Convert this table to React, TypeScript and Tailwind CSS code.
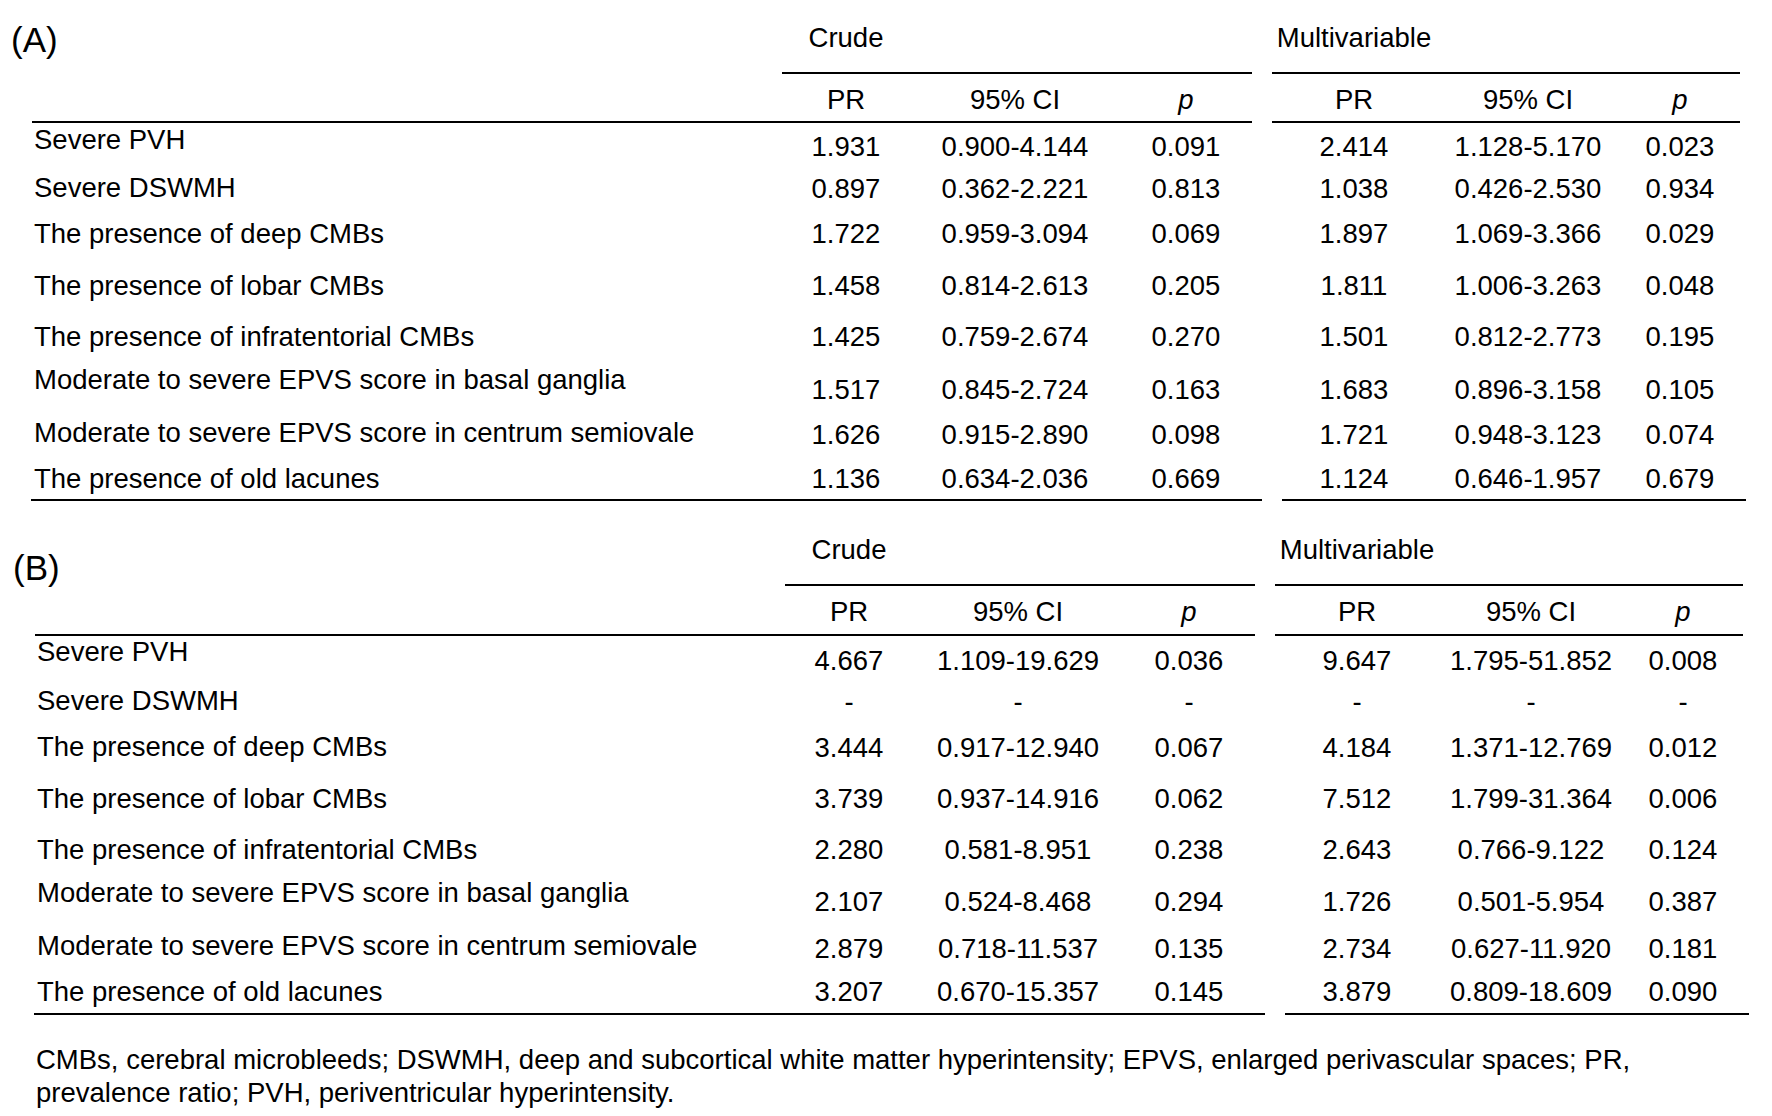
type Row = {
  label: string;
  v: string[];
  h: string;
  vt: string;
  lt: string;
};

const rowsA: Row[] = [
  { label: "Severe PVH", v: ["1.931", "0.900-4.144", "0.091", "2.414", "1.128-5.170", "0.023"], h: "h-[45px]", vt: "pt-[9px]", lt: "pt-[2px]" },
  { label: "Severe DSWMH", v: ["0.897", "0.362-2.221", "0.813", "1.038", "0.426-2.530", "0.934"], h: "h-[44px]", vt: "pt-[6px]", lt: "pt-[5px]" },
  { label: "The presence of deep CMBs", v: ["1.722", "0.959-3.094", "0.069", "1.897", "1.069-3.366", "0.029"], h: "h-[48px]", vt: "pt-[7px]", lt: "pt-[7px]" },
  { label: "The presence of lobar CMBs", v: ["1.458", "0.814-2.613", "0.205", "1.811", "1.006-3.263", "0.048"], h: "h-[51px]", vt: "pt-[11px]", lt: "pt-[11px]" },
  { label: "The presence of infratentorial CMBs", v: ["1.425", "0.759-2.674", "0.270", "1.501", "0.812-2.773", "0.195"], h: "h-[52px]", vt: "pt-[11px]", lt: "pt-[11px]" },
  { label: "Moderate to severe EPVS score in basal ganglia", v: ["1.517", "0.845-2.724", "0.163", "1.683", "0.896-3.158", "0.105"], h: "h-[49px]", vt: "pt-[12px]", lt: "pt-[2px]" },
  { label: "Moderate to severe EPVS score in centrum semiovale", v: ["1.626", "0.915-2.890", "0.098", "1.721", "0.948-3.123", "0.074"], h: "h-[45px]", vt: "pt-[8px]", lt: "pt-[6px]" },
  { label: "The presence of old lacunes", v: ["1.136", "0.634-2.036", "0.669", "1.124", "0.646-1.957", "0.679"], h: "h-[42px]", vt: "pt-[7px]", lt: "pt-[7px]" },
];

const rowsB: Row[] = [
  { label: "Severe PVH", v: ["4.667", "1.109-19.629", "0.036", "9.647", "1.795-51.852", "0.008"], h: "h-[45px]", vt: "pt-[10px]", lt: "pt-[1px]" },
  { label: "Severe DSWMH", v: ["-", "-", "-", "-", "-", "-"], h: "h-[44px]", vt: "pt-[6px]", lt: "pt-[5px]" },
  { label: "The presence of deep CMBs", v: ["3.444", "0.917-12.940", "0.067", "4.184", "1.371-12.769", "0.012"], h: "h-[49px]", vt: "pt-[8px]", lt: "pt-[7px]" },
  { label: "The presence of lobar CMBs", v: ["3.739", "0.937-14.916", "0.062", "7.512", "1.799-31.364", "0.006"], h: "h-[51px]", vt: "pt-[10px]", lt: "pt-[10px]" },
  { label: "The presence of infratentorial CMBs", v: ["2.280", "0.581-8.951", "0.238", "2.643", "0.766-9.122", "0.124"], h: "h-[51px]", vt: "pt-[10px]", lt: "pt-[10px]" },
  { label: "Moderate to severe EPVS score in basal ganglia", v: ["2.107", "0.524-8.468", "0.294", "1.726", "0.501-5.954", "0.387"], h: "h-[49px]", vt: "pt-[11px]", lt: "pt-[2px]" },
  { label: "Moderate to severe EPVS score in centrum semiovale", v: ["2.879", "0.718-11.537", "0.135", "2.734", "0.627-11.920", "0.181"], h: "h-[46px]", vt: "pt-[9px]", lt: "pt-[6px]" },
  { label: "The presence of old lacunes", v: ["3.207", "0.670-15.357", "0.145", "3.879", "0.809-18.609", "0.090"], h: "h-[42px]", vt: "pt-[6px]", lt: "pt-[6px]" },
];

function Cells({ a, b, c, wide }: { a: React.ReactNode; b: React.ReactNode; c: React.ReactNode; wide?: boolean }) {
  // crude group widths vs multivariable group widths
  if (wide) {
    return (
      <>
        <div className="w-[128px] text-center">{a}</div>
        <div className="w-[210px] text-center">{b}</div>
        <div className="w-[132px] text-center">{c}</div>
      </>
    );
  }
  return (
    <>
      <div className="w-[164px] text-center">{a}</div>
      <div className="w-[184px] text-center">{b}</div>
      <div className="w-[120px] text-center">{c}</div>
    </>
  );
}

function DataRow({ row }: { row: Row }) {
  return (
    <div className={`flex ${row.h}`}>
      <div className={`w-[748px] whitespace-nowrap ${row.lt}`}>{row.label}</div>
      <div className={`flex w-[470px] ${row.vt}`}>
        <Cells wide a={row.v[0]} b={row.v[1]} c={row.v[2]} />
      </div>
      <div className="w-[20px]" />
      <div className={`flex w-[468px] ${row.vt}`}>
        <Cells a={row.v[3]} b={row.v[4]} c={row.v[5]} />
      </div>
    </div>
  );
}

type TableProps = {
  letter: string;
  rows: Row[];
  titleH: string;
  titlePt: string;
  letterPt: string;
  letterMl: string;
  headerH: string;
  headerPt: string;
};

function StatTable({ letter, rows, titleH, titlePt, letterPt, letterMl, headerH, headerPt }: TableProps) {
  return (
    <div>
      <div className={`flex ${titleH}`}>
        <div className={`w-[748px] text-[35px] leading-[40px] ${letterMl} ${letterPt}`}>{letter}</div>
        <div className={`w-[470px] ${titlePt}`}>
          <div className="w-[128px] text-center">Crude</div>
        </div>
        <div className="w-[20px]" />
        <div className={`w-[468px] ${titlePt}`}>
          <div className="w-[164px] whitespace-nowrap text-center">Multivariable</div>
        </div>
      </div>

      <div className="flex">
        <div className="w-[748px]" />
        <div className="h-[2px] w-[470px] bg-black" />
        <div className="w-[20px]" />
        <div className="h-[2px] w-[468px] bg-black" />
      </div>

      <div className={`flex ${headerH}`}>
        <div className="w-[748px]" />
        <div className={`flex w-[470px] ${headerPt}`}>
          <Cells wide a="PR" b="95% CI" c={<i>p</i>} />
        </div>
        <div className="w-[20px]" />
        <div className={`flex w-[468px] ${headerPt}`}>
          <Cells a="PR" b="95% CI" c={<i>p</i>} />
        </div>
      </div>

      <div className="flex">
        <div className="-ml-[2px] h-[2px] w-[1220px] bg-black" />
        <div className="w-[20px]" />
        <div className="h-[2px] w-[468px] bg-black" />
      </div>

      {rows.map((r) => (
        <DataRow key={r.label} row={r} />
      ))}

      <div className="flex">
        <div className="-ml-[3px] h-[2px] w-[1231px] bg-black" />
        <div className="w-[20px]" />
        <div className="h-[2px] w-[464px] bg-black" />
      </div>
    </div>
  );
}

export default function App() {
  return (
    <div className="h-[1116px] w-[1772px] overflow-hidden bg-white pl-[34px] font-['Liberation_Sans',Arial,sans-serif] text-[27.5px] leading-[30px] text-black">
      <StatTable
        letter="(A)"
        rows={rowsA}
        titleH="h-[72px]"
        titlePt="pt-[23px]"
        letterPt="pt-[20px]"
        letterMl="-ml-[23px] w-[771px]"
        headerH="h-[47px]"
        headerPt="pt-[11px]"
      />
      <div className="ml-[3px]">
        <StatTable
          letter="(B)"
          rows={rowsB}
          titleH="h-[83px]"
          titlePt="pt-[34px]"
          letterPt="pt-[47px]"
          letterMl="-ml-[24px] w-[772px]"
          headerH="h-[48px]"
          headerPt="pt-[11px]"
        />
      </div>
      <p className="mt-[28px] pl-[2px] leading-[33px]">
        CMBs, cerebral microbleeds; DSWMH, deep and subcortical white matter hyperintensity; EPVS, enlarged perivascular spaces; PR,
        <br />
        prevalence ratio; PVH, periventricular hyperintensity.
      </p>
    </div>
  );
}
